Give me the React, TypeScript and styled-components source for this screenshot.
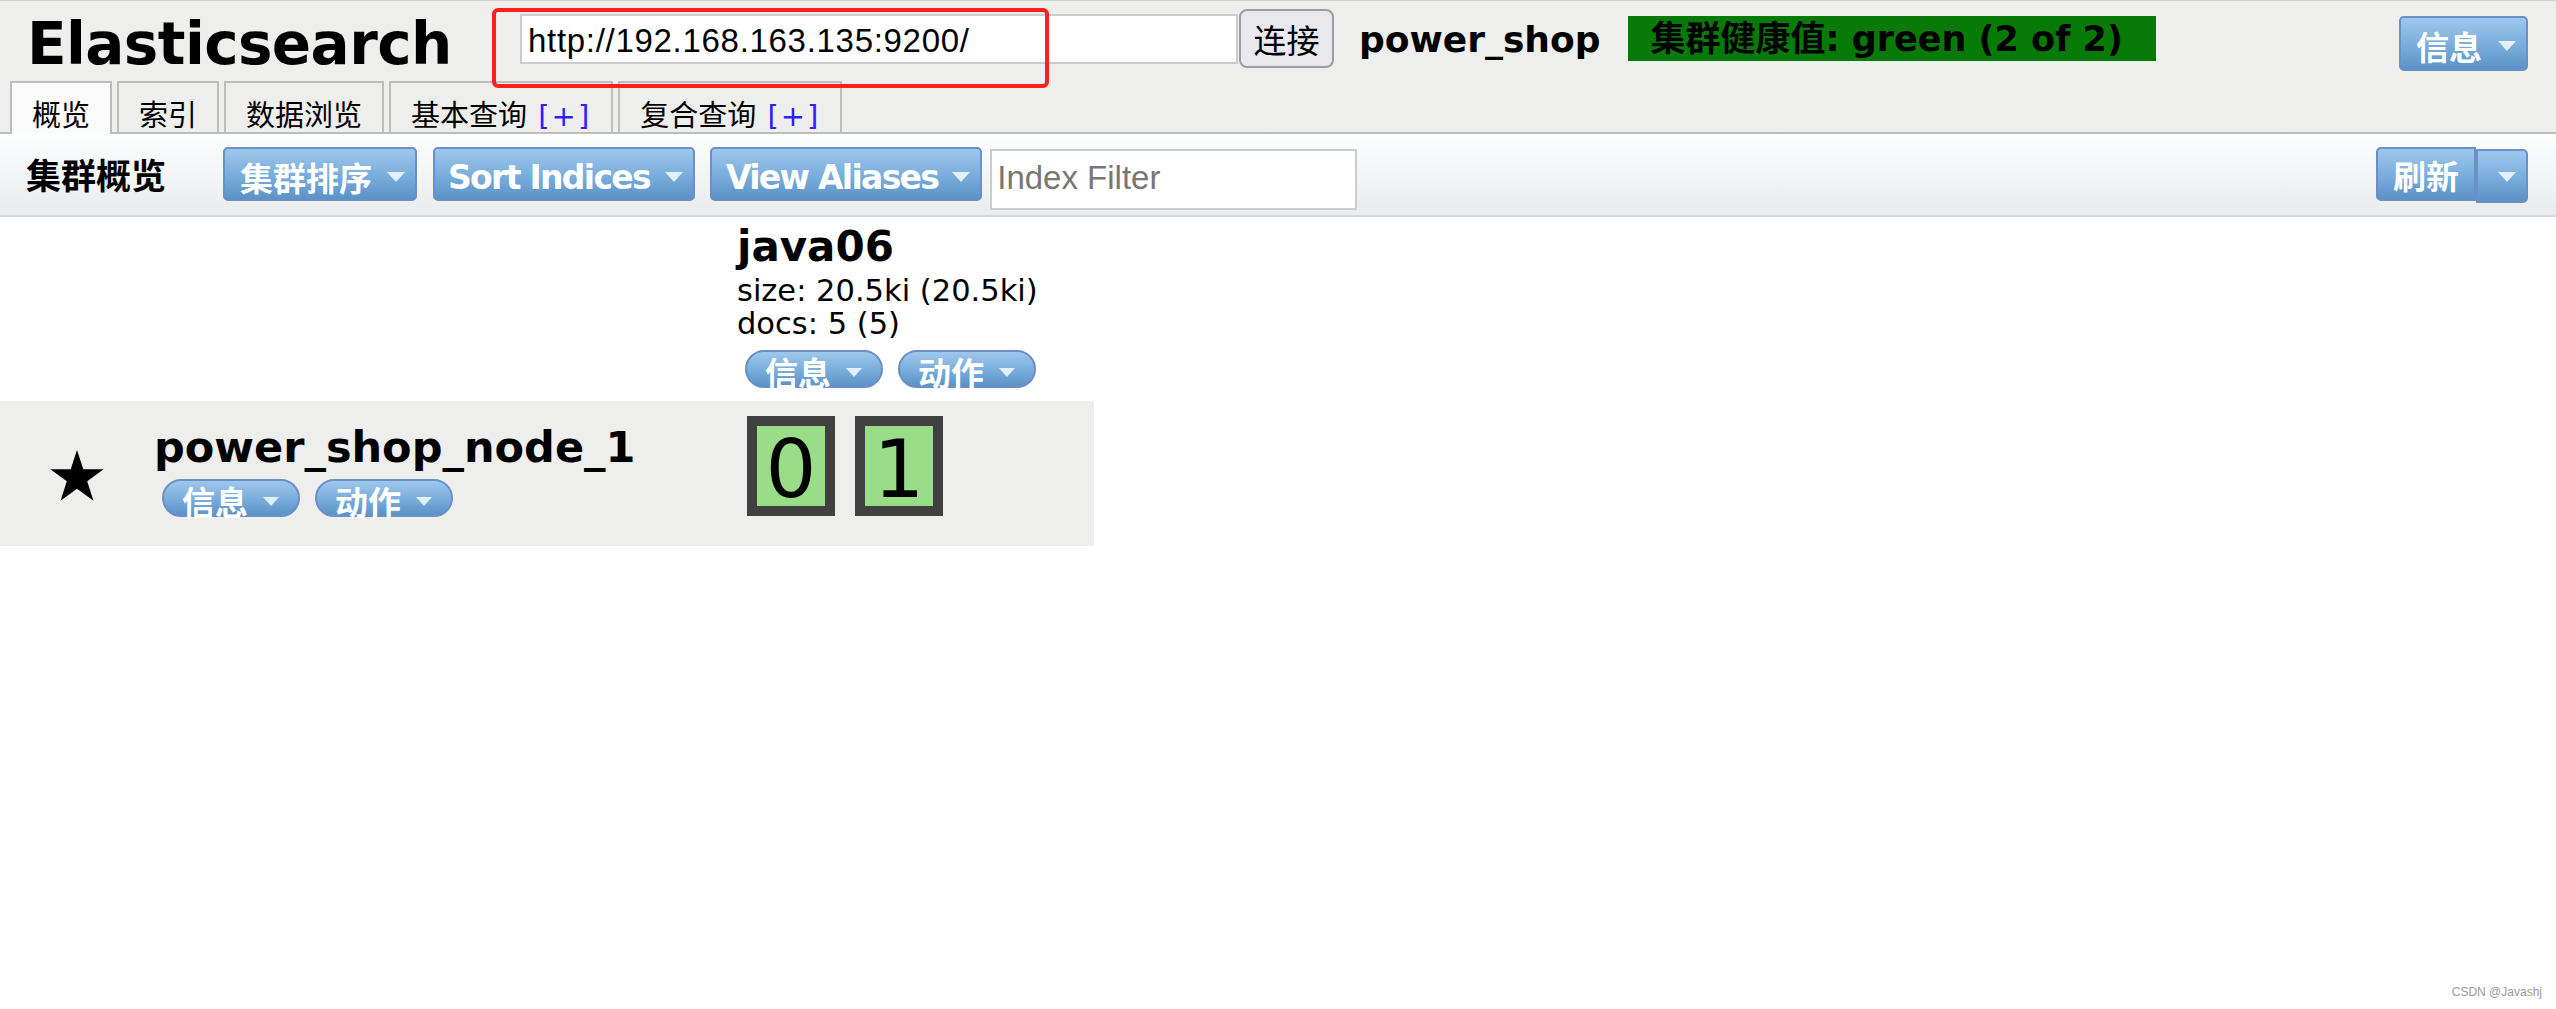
import React from "react";
import styled, { createGlobalStyle } from "styled-components";

const SANS = `"DejaVu Sans", "Noto Sans CJK SC", sans-serif`;
const FORM = `"Liberation Sans", "Noto Sans CJK SC", sans-serif`;
const BLUE_FILL = `linear-gradient(to bottom, #9ec7ed 0%, #7cafdd 50%, #5b92c7 100%)`;

const GlobalStyle = createGlobalStyle`
  *, *::before, *::after { box-sizing: border-box; }
  html, body { margin: 0; padding: 0; background: #ffffff; }
  body { font-family: ${SANS}; color: #000; }
`;

const Page = styled.div`
  position: relative;
  min-height: 1009px;
  overflow: hidden;
  background: #fff;
`;

/* ---------- header ---------- */
const Header = styled.header`
  background: #eeeeec;
  border-top: 1px solid #cfcfcf;
`;

const HeaderTop = styled.div`
  display: flex;
  align-items: flex-start;
  height: 80px;
  padding-left: 27px;
`;

const Title = styled.h1`
  flex: none;
  width: 493px;
  margin: 13px 0 0;
  font: bold 58px/60px ${SANS};
  letter-spacing: -0.6px;
  color: #000;
  white-space: nowrap;
`;

const UrlInput = styled.input`
  flex: none;
  margin-top: 13px;
  width: 718px;
  height: 50px;
  border: 2px solid #cccccc;
  background: #fff;
  padding: 4px 0 0 6px;
  font: 33px ${FORM};
  letter-spacing: 0.7px;
  color: #000;
  outline: none;
`;

const ConnectButton = styled.button`
  flex: none;
  margin: 8px 0 0 1px;
  width: 95px;
  height: 59px;
  padding: 5px 0 0;
  border: 2px solid #9d9cab;
  border-radius: 8px;
  background: #e9e9ed;
  font: 33px/33px ${SANS};
  color: #000;
`;

const ClusterName = styled.span`
  flex: none;
  margin: 21px 0 0 25px;
  font: bold 36px/36px ${SANS};
  white-space: nowrap;
`;

const HealthBadge = styled.span`
  flex: none;
  margin: 15px 0 0 27px;
  height: 45px;
  padding: 2px 33px 0 23px;
  background: #087a08;
  font: bold 35px/43px ${SANS};
  color: #000;
  white-space: nowrap;
`;

const Spacer = styled.div`
  flex: 1;
`;

const BlueButton = styled.button<{ $height: number; $gap?: number; $padL?: number; $padR?: number }>`
  display: inline-flex;
  align-items: flex-start;
  flex: none;
  margin: 0;
  height: ${(p) => p.$height}px;
  padding: 0 ${(p) => p.$padR ?? 10}px 0 ${(p) => p.$padL ?? 15}px;
  gap: ${(p) => p.$gap ?? 15}px;
  border: 2px solid #6b8fc7;
  border-radius: 5px;
  background: ${BLUE_FILL};
  color: #fff;
  font: bold 33px/33px ${SANS};
  cursor: pointer;
`;

const ButtonLabel = styled.span<{ $mt: number; $ls?: number }>`
  margin-top: ${(p) => p.$mt}px;
  letter-spacing: ${(p) => p.$ls ?? 0}px;
  white-space: nowrap;
`;

const Caret = styled.span<{ $mt: number; $w?: number; $h?: number }>`
  flex: none;
  width: 0;
  height: 0;
  margin-top: ${(p) => p.$mt}px;
  border-left: ${(p) => (p.$w ?? 18) / 2}px solid transparent;
  border-right: ${(p) => (p.$w ?? 18) / 2}px solid transparent;
  border-top: ${(p) => p.$h ?? 10}px solid rgba(236, 244, 252, 0.92);
`;

const HeaderMenu = styled.div`
  flex: none;
  margin: 15px 28px 0 0;
`;

/* ---------- tabs ---------- */
const TabBar = styled.nav`
  display: flex;
  align-items: flex-end;
  gap: 5px;
  height: 53px;
  padding-left: 10px;
  border-bottom: 2px solid #bcbcbc;
`;

const Tab = styled.div<{ $active?: boolean }>`
  position: relative;
  z-index: ${(p) => (p.$active ? 1 : 0)};
  flex: none;
  height: ${(p) => (p.$active ? 53 : 51)}px;
  margin-bottom: ${(p) => (p.$active ? -2 : 0)}px;
  padding: 19px 20px 0;
  border: 2px solid #bdbdbd;
  border-bottom: none;
  background: ${(p) => (p.$active ? "#fbfbfb" : "transparent")};
  font: 29px/29px ${SANS};
  color: #000;
  white-space: nowrap;
`;

const TabPlus = styled.span`
  margin-left: 2px;
  letter-spacing: 2px;
  color: #2d1fff;
`;

/* ---------- toolbar ---------- */
const Toolbar = styled.div`
  display: flex;
  align-items: flex-start;
  height: 83px;
  padding: 0 28px 0 26px;
  border-bottom: 2px solid #d8d8d8;
  background: linear-gradient(to bottom, #fdfefe 0%, #eaebed 100%);
`;

const ToolbarLabel = styled.span`
  flex: none;
  margin: 26px 57px 0 0;
  font: bold 35px/35px ${SANS};
  white-space: nowrap;
`;

const ToolSlot = styled.div<{ $ml?: number }>`
  flex: none;
  margin: 13px 0 0 ${(p) => p.$ml ?? 0}px;
`;

const FilterInput = styled.input`
  flex: none;
  margin: 15px 0 0 8px;
  width: 367px;
  height: 61px;
  padding: 0 0 4px 5px;
  border: 2px solid #cccccc;
  background: #fff;
  font: 33px ${FORM};
  color: #000;
  outline: none;
  &::placeholder { color: #777777; }
`;

const SplitGroup = styled.div`
  display: flex;
  align-items: flex-start;
  flex: none;
  margin-top: 13px;
`;

const SplitMain = styled(BlueButton)`
  border-radius: 5px 0 0 5px;
`;

const SplitDrop = styled.button`
  display: inline-flex;
  align-items: flex-start;
  flex: none;
  margin: 2px 0 0;
  width: 52px;
  height: 54px;
  padding: 0 0 0 20px;
  border: 2px solid #6b8fc7;
  border-radius: 0 5px 5px 0;
  background: ${BLUE_FILL};
  cursor: pointer;
`;

/* ---------- cluster table ---------- */
const ClusterTable = styled.div`
  display: grid;
  grid-template-columns: 731px 363px;
  width: 1094px;
`;

const Cell = styled.div<{ $shade?: boolean; $h: number }>`
  height: ${(p) => p.$h}px;
  background: ${(p) => (p.$shade ? "#eeeeec" : "#ffffff")};
`;

const IndexHead = styled(Cell)`
  padding: 6px 0 0 6px;
`;

const IndexName = styled.div`
  font: bold 42px/48px ${SANS};
  white-space: nowrap;
`;

const StatBlock = styled.div`
  margin-top: 3px;
  font: 30.5px/33px ${SANS};
  white-space: nowrap;
`;

const PillRow = styled.div<{ $clip?: boolean; $mt: number; $ml: number }>`
  display: flex;
  gap: 15px;
  height: 38px;
  margin: ${(p) => p.$mt}px 0 0 ${(p) => p.$ml}px;
  overflow: ${(p) => (p.$clip ? "hidden" : "visible")};
`;

const Pill = styled.button`
  display: inline-flex;
  align-items: flex-start;
  gap: 15px;
  flex: none;
  margin: 0;
  height: 38px;
  padding: 6px 19px 0 18px;
  border: 2px solid #6b8fc7;
  border-radius: 19px;
  background: ${BLUE_FILL};
  color: #fff;
  font: bold 33px/33px ${SANS};
  cursor: pointer;
`;

const NodeCell = styled(Cell)`
  display: flex;
  align-items: flex-start;
  padding-top: 25px;
`;

const StarIcon = styled.svg`
  flex: none;
  margin: 24px 0 0 49px;
`;

const NodeInfo = styled.div`
  margin-left: 49px;
`;

const NodeName = styled.div`
  font: bold 43px/42px ${SANS};
  white-space: nowrap;
`;

const ShardCell = styled(Cell)`
  display: flex;
  align-items: flex-start;
  gap: 20px;
  padding: 15px 0 0 16px;
`;

const Shard = styled.div`
  flex: none;
  width: 88px;
  height: 100px;
  border: 10px solid #404040;
  background: #99dd88;
  font: 80px/88px ${SANS};
  text-align: center;
  overflow: hidden;
`;

/* ---------- overlays ---------- */
const Annotation = styled.div`
  position: absolute;
  left: 492px;
  top: 8px;
  width: 557px;
  height: 80px;
  border: 4px solid #ff1f1f;
  border-radius: 6px;
  pointer-events: none;
`;

const Watermark = styled.div`
  position: absolute;
  right: 14px;
  bottom: 11px;
  font: 12px/12px "Liberation Sans", Arial, sans-serif;
  color: #9a9a9a;
  white-space: nowrap;
`;

const Star = () => (
  <StarIcon width="56" height="52" viewBox="0 0 56 52" aria-hidden="true">
    <polygon
      fill="#000"
      points="28,0 34.29,19.34 54.63,19.35 38.18,31.31 44.46,50.65 28,38.7 11.54,50.65 17.82,31.31 1.37,19.35 21.71,19.34"
    />
  </StarIcon>
);

const PillButton = ({ label }: { label: string }) => (
  <Pill>
    <span>{label}</span>
    <Caret $mt={10} $w={16} $h={9} />
  </Pill>
);

export default function App() {
  return (
    <Page>
      <GlobalStyle />
      <Header>
        <HeaderTop>
          <Title>Elasticsearch</Title>
          <UrlInput defaultValue="http://192.168.163.135:9200/" />
          <ConnectButton>连接</ConnectButton>
          <ClusterName>power_shop</ClusterName>
          <HealthBadge>集群健康值: green (2 of 2)</HealthBadge>
          <Spacer />
          <HeaderMenu>
            <BlueButton $height={55} $gap={16}>
              <ButtonLabel $mt={14}>信息</ButtonLabel>
              <Caret $mt={23} />
            </BlueButton>
          </HeaderMenu>
        </HeaderTop>
        <TabBar>
          <Tab $active>概览</Tab>
          <Tab>索引</Tab>
          <Tab>数据浏览</Tab>
          <Tab>
            基本查询 <TabPlus>[+]</TabPlus>
          </Tab>
          <Tab>
            复合查询 <TabPlus>[+]</TabPlus>
          </Tab>
        </TabBar>
      </Header>

      <Toolbar>
        <ToolbarLabel>集群概览</ToolbarLabel>
        <ToolSlot>
          <BlueButton $height={54}>
            <ButtonLabel $mt={14}>集群排序</ButtonLabel>
            <Caret $mt={23} />
          </BlueButton>
        </ToolSlot>
        <ToolSlot $ml={16}>
          <BlueButton $height={54} $padL={13}>
            <ButtonLabel $mt={12} $ls={-1.7}>Sort Indices</ButtonLabel>
            <Caret $mt={23} />
          </BlueButton>
        </ToolSlot>
        <ToolSlot $ml={15}>
          <BlueButton $height={54} $padL={14} $gap={14} $padR={10}>
            <ButtonLabel $mt={12} $ls={-1.7}>View Aliases</ButtonLabel>
            <Caret $mt={23} />
          </BlueButton>
        </ToolSlot>
        <FilterInput placeholder="Index Filter" />
        <Spacer />
        <SplitGroup>
          <SplitMain $height={54} $padR={15}>
            <ButtonLabel $mt={12}>刷新</ButtonLabel>
          </SplitMain>
          <SplitDrop aria-label="refresh options">
            <Caret $mt={21} />
          </SplitDrop>
        </SplitGroup>
      </Toolbar>

      <ClusterTable>
        <Cell $h={184} />
        <IndexHead $h={184}>
          <IndexName>java06</IndexName>
          <StatBlock>
            <div>size: 20.5ki (20.5ki)</div>
            <div>docs: 5 (5)</div>
          </StatBlock>
          <PillRow $clip $mt={10} $ml={8}>
            <PillButton label="信息" />
            <PillButton label="动作" />
          </PillRow>
        </IndexHead>

        <NodeCell $h={145} $shade>
          <Star />
          <NodeInfo>
            <NodeName>power_shop_node_1</NodeName>
            <PillRow $mt={11} $ml={8}>
              <PillButton label="信息" />
              <PillButton label="动作" />
            </PillRow>
          </NodeInfo>
        </NodeCell>
        <ShardCell $h={145} $shade>
          <Shard>0</Shard>
          <Shard>1</Shard>
        </ShardCell>
      </ClusterTable>

      <Annotation />
      <Watermark>CSDN @Javashj</Watermark>
    </Page>
  );
}
